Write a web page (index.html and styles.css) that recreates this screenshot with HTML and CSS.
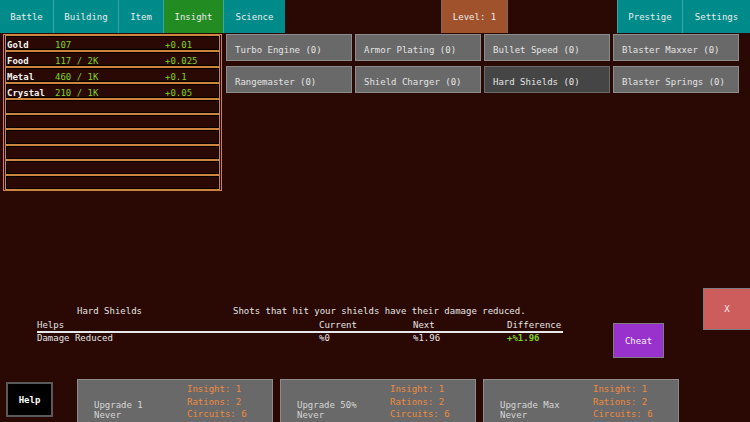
FILE: index.html
```html
<!DOCTYPE html>
<html>
<head>
<meta charset="utf-8">
<link rel="stylesheet" href="styles.css">
</head>
<body>
<div class="topbar">
  <div class="tab w-battle">Battle</div>
  <div class="tab w-building">Building</div>
  <div class="tab w-item">Item</div>
  <div class="tab tab-active w-insight">Insight</div>
  <div class="tab w-science">Science</div>
  <div class="level">Level: 1</div>
  <div class="right-tabs">
    <div class="tab w-prestige">Prestige</div>
    <div class="tab w-settings">Settings</div>
  </div>
</div>

<div class="main">
  <div class="resources">
    <div class="res-row"><span class="res-name">Gold</span><span class="res-val">107</span><span class="res-val">+0.01</span></div>
    <div class="res-row"><span class="res-name">Food</span><span class="res-val">117 / 2K</span><span class="res-val">+0.025</span></div>
    <div class="res-row"><span class="res-name">Metal</span><span class="res-val">460 / 1K</span><span class="res-val">+0.1</span></div>
    <div class="res-row"><span class="res-name">Crystal</span><span class="res-val">210 / 1K</span><span class="res-val">+0.05</span></div>
    <div class="res-row"></div>
    <div class="res-row"></div>
    <div class="res-row"></div>
    <div class="res-row"></div>
    <div class="res-row"></div>
    <div class="res-row"></div>
  </div>
  <div class="upgrades">
    <div class="upg">Turbo Engine (0)</div>
    <div class="upg">Armor Plating (0)</div>
    <div class="upg">Bullet Speed (0)</div>
    <div class="upg">Blaster Maxxer (0)</div>
    <div class="upg">Rangemaster (0)</div>
    <div class="upg">Shield Charger (0)</div>
    <div class="upg upg-selected">Hard Shields (0)</div>
    <div class="upg">Blaster Springs (0)</div>
  </div>
</div>

<div class="info">
  <div class="details">
    <div class="details-head">
      <span class="details-title">Hard Shields</span>
      <span class="details-desc">Shots that hit your shields have their damage reduced.</span>
    </div>
    <div class="stats">
      <div class="stats-row stats-header">
        <span class="c-help">Helps</span><span class="c-num">Current</span><span class="c-num">Next</span><span class="c-diff">Difference</span>
      </div>
      <div class="stats-row">
        <span class="c-help">Damage Reduced</span><span class="c-num">%0</span><span class="c-num">%1.96</span><span class="c-diff green">+%1.96</span>
      </div>
    </div>
  </div>
  <div class="cheat">Cheat</div>
  <div class="close">X</div>
</div>

<div class="bottom">
  <div class="help">Help</div>
  <div class="buy">
    <div class="buy-left"><div>Upgrade 1</div><div>Never</div></div>
    <div class="buy-cost"><div>Insight: 1</div><div>Rations: 2</div><div>Circuits: 6</div></div>
  </div>
  <div class="buy">
    <div class="buy-left"><div>Upgrade 50%</div><div>Never</div></div>
    <div class="buy-cost"><div>Insight: 1</div><div>Rations: 2</div><div>Circuits: 6</div></div>
  </div>
  <div class="buy">
    <div class="buy-left"><div>Upgrade Max</div><div>Never</div></div>
    <div class="buy-cost"><div>Insight: 1</div><div>Rations: 2</div><div>Circuits: 6</div></div>
  </div>
</div>
</body>
</html>
```
FILE: styles.css
```css
* { box-sizing: border-box; }
html, body {
  margin: 0;
  padding: 0;
  width: 750px;
  height: 422px;
  overflow: hidden;
  background: #2a0904;
  font-family: "DejaVu Sans Mono", "Liberation Mono", monospace;
  font-size: 9px;
  color: #e4e4e4;
}

/* top bar */
.topbar {
  display: flex;
  height: 33px;
}
.tab {
  height: 33px;
  line-height: 34px;
  text-align: center;
  background: #008b8b;
  border-right: 1px solid #3aa4a4;
  color: #ececec;
}
.tab-active { background: #228b22; }
.w-battle { width: 54px; }
.w-building { width: 65px; }
.w-item { width: 45px; }
.w-insight { width: 60px; }
.w-science { width: 61px; border-right: none; }
.w-prestige { width: 66px; border-left: 1px solid #3aa4a4; }
.w-settings { width: 67px; border-right: none; }
.level {
  margin-left: 156px;
  width: 67px;
  height: 33px;
  line-height: 34px;
  text-align: center;
  background: #a0522d;
  border-left: 1px solid #7a6a60;
  border-right: 1px solid #7a6a60;
  color: #ececec;
}
.right-tabs {
  display: flex;
  margin-left: auto;
}

/* main area */
.main {
  display: flex;
  align-items: flex-start;
  margin-top: 1px;
  height: 158px;
}
.resources {
  margin-left: 3px;
  width: 219px;
  height: 157px;
  border: 1px solid #cd853f;
  padding: 0 1px;
  display: grid;
  grid-template-rows: repeat(10, 1fr);
}
.res-row {
  border: 1px solid #cd853f;
  box-shadow: inset 0 0 0 1px #000;
  display: grid;
  grid-template-columns: 48px 110px 1fr;
  align-items: center;
  padding-left: 1px;
  padding-top: 4px;
  line-height: 10px;
}
.res-name { color: #f2f2f2; font-weight: bold; }
.res-val { color: #7ed321; }

.upgrades {
  margin-left: 4px;
  display: grid;
  grid-template-columns: repeat(4, 126px);
  grid-template-rows: 27px 27px;
  column-gap: 3px;
  row-gap: 5px;
}
.upg {
  background: #696969;
  border: 1px solid #8c8c8c;
  color: #e4e4e4;
  padding: 5px 0 0 8px;
  display: flex;
  align-items: center;
}
.upg-selected { background: #454545; border-color: #6a6a6a; }

/* info */
.info {
  display: flex;
  align-items: flex-start;
  margin-top: 96px;
  height: 91px;
}
.details {
  margin-left: 37px;
  width: 526px;
  padding-top: 17px;
}
.details-head {
  display: flex;
  height: 12px;
  line-height: 12px;
}
.details-title { margin-left: 40px; width: 156px; }
.stats { margin-top: 3px; }
.stats-row {
  display: flex;
  line-height: 11px;
  height: 11px;
}
.stats-header {
  border-bottom: 2px solid #e8e8e8;
  height: 13px;
}
.c-help { width: 282px; }
.c-num { width: 94px; }
.c-diff { width: 56px; }
.green { color: #7ed321; font-weight: bold; }

.cheat {
  margin-left: 50px;
  margin-top: 35px;
  width: 51px;
  height: 35px;
  background: #9932cc;
  border: 1px solid #7d7d7d;
  display: flex;
  align-items: center;
  justify-content: center;
  color: #f0f0f0;
}
.close {
  margin-left: auto;
  width: 47px;
  height: 42px;
  background: #cd5c5c;
  border: 1px solid #7d7d7d;
  border-right: none;
  display: flex;
  align-items: center;
  justify-content: center;
  color: #f0f0f0;
}

/* bottom */
.bottom {
  display: flex;
  align-items: flex-start;
}
.help {
  margin-left: 6px;
  margin-top: 3px;
  width: 47px;
  height: 35px;
  background: #000;
  border: 2px solid #5a5a5a;
  display: flex;
  align-items: center;
  justify-content: center;
  color: #ffffff;
  font-weight: bold;
}
.buy {
  width: 196px;
  height: 50px;
  background: #696969;
  border: 1px solid #8c8c8c;
  display: flex;
  margin-left: 7px;
}
.help + .buy { margin-left: 24px; }
.buy-left {
  width: 109px;
  padding-left: 16px;
  padding-top: 20px;
  line-height: 10px;
  color: #d6d6d6;
}
.buy-cost {
  padding-top: 3px;
  line-height: 12.6px;
  color: #ef8a3c;
}
```
